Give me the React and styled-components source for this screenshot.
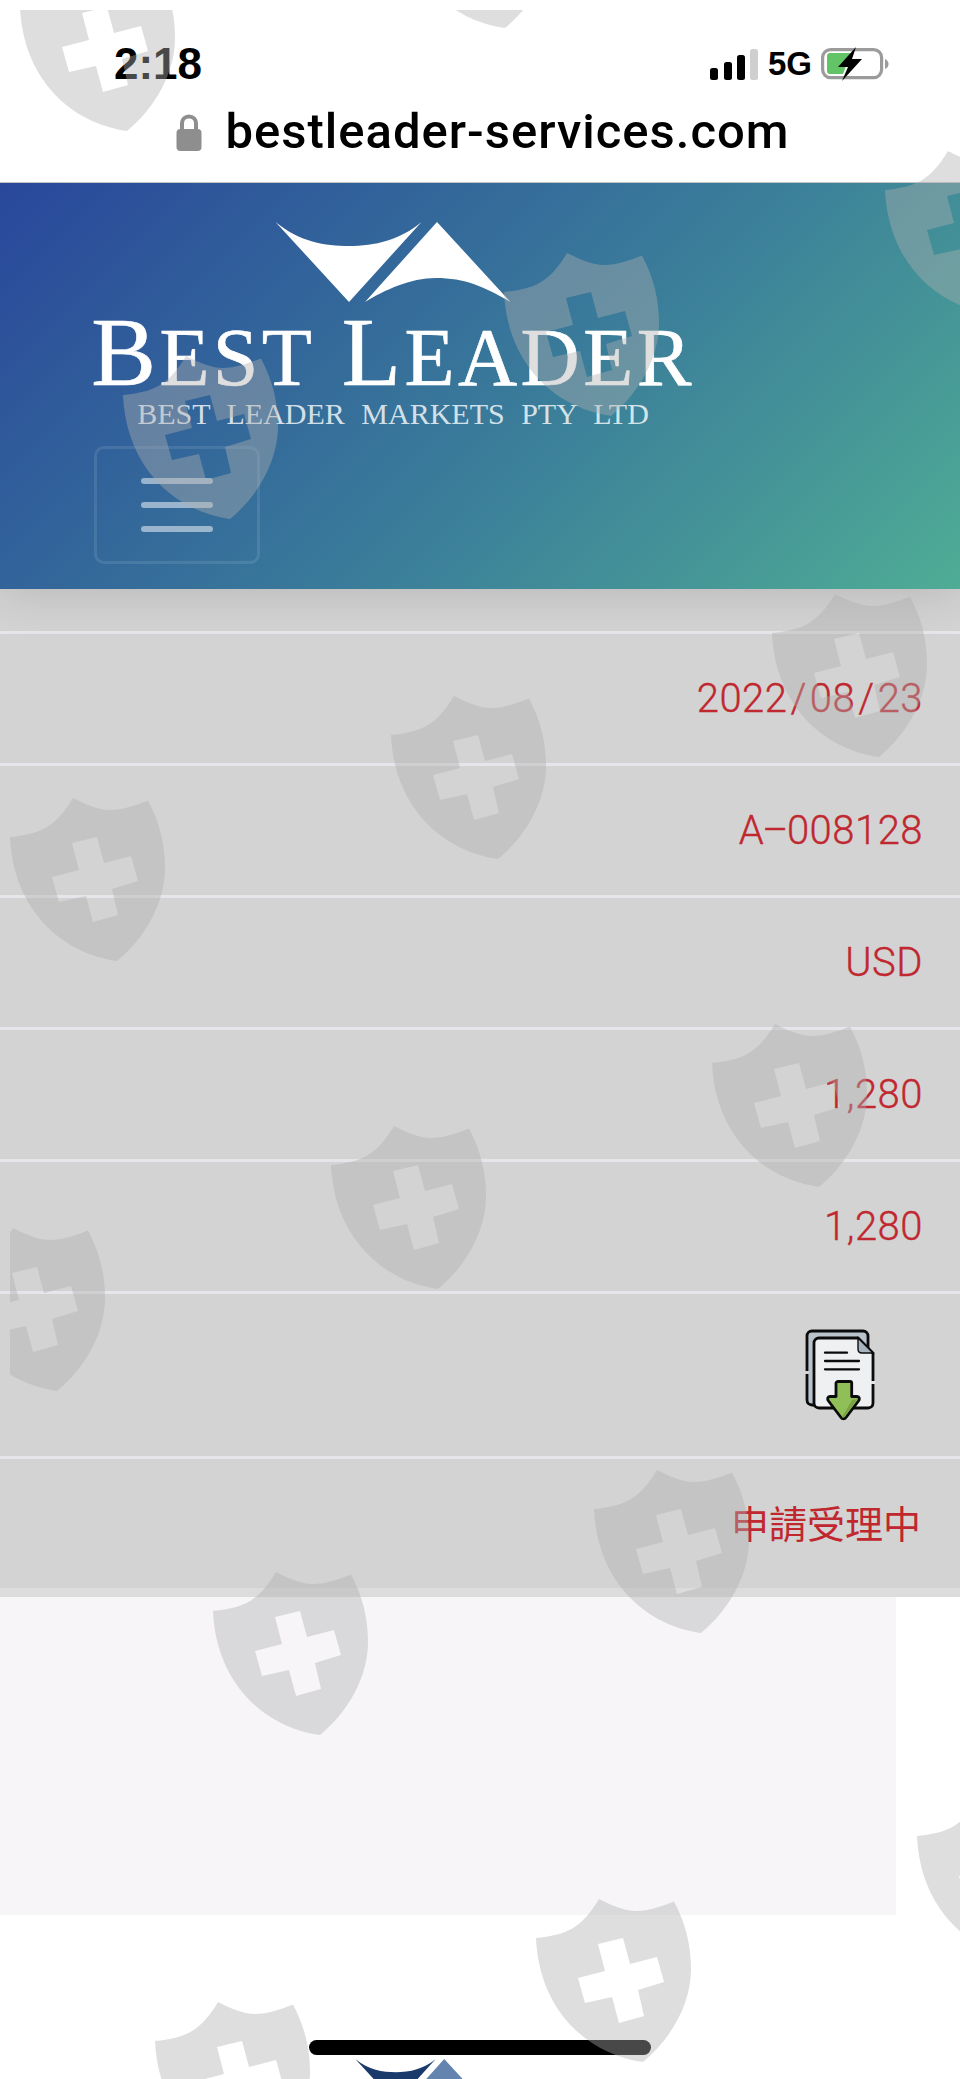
import React from 'react'
import styled, { createGlobalStyle } from 'styled-components'

const GlobalStyle = createGlobalStyle`
html, body {
    margin: 0;
    padding: 0;
    background: #fff;
    font-family: "Liberation Sans", Arial, sans-serif;
}
`

const Page = styled.div`
position: relative;
width: 960px;
height: 2079px;
overflow: hidden;
background: #fff;
`

/* watermark layer lies over everything */
const Watermark = styled.div`
position: absolute;
top: 10px;
left: 10px;
right: 0;
bottom: 0;
overflow: hidden;
z-index: 10;
pointer-events: none;
`

const ShieldSvg = styled.svg`
position: absolute;
width: 155px;
height: 163px;
left: ${p => p.$x - 10}px;
top: ${p => p.$y - 10}px;
`

const StatusArea = styled.div`
position: relative;
z-index: 1;
height: 183px;
box-sizing: border-box;
background: #fff;
border-bottom: 1px solid #c4c4c4;
display: flex;
flex-direction: column;
`

const StatusBar = styled.div`
display: flex;
justify-content: space-between;
align-items: center;
height: 32px;
margin-top: 48px;
padding: 0 71px 0 114px;
`

const Time = styled.span`
font-size: 44px;
font-weight: 700;
line-height: 32px;
color: #000;
`

const Indicators = styled.div`
display: flex;
align-items: center;
gap: 9px;
`

const NetworkLabel = styled.span`
font-size: 33px;
font-weight: 700;
line-height: 32px;
color: #000;
`

const UrlRow = styled.div`
display: flex;
justify-content: center;
align-items: center;
gap: 23px;
margin-top: 30px;
padding-left: 6px;
`

const UrlText = styled.span`
font-family: Roboto, "Liberation Sans", sans-serif;
font-size: 49px;
font-weight: 500;
line-height: 44px;
letter-spacing: 1px;
color: #000;
`

const Header = styled.header`
position: relative;
height: 406px;
box-sizing: border-box;
padding: 39px 0 0 94px;
background: linear-gradient(135deg, #29479b 0%, #3a7c9a 55%, #4fac95 100%);
box-shadow: 0 6px 44px rgba(0, 0, 0, 0.12);
`

const Logo = styled.div`
width: 598px;
display: flex;
flex-direction: column;
align-items: center;
color: #fff;
`

const LogoMark = styled.svg`
display: block;
width: ${p => p.$width}px;
height: auto;
`

const LogoName = styled.div`
font-family: "Liberation Serif", "Times New Roman", serif;
font-size: 82px;
line-height: 66px;
margin-top: 18px;
white-space: nowrap;
letter-spacing: 3.4px;
word-spacing: 4px;
-webkit-text-stroke: 0.6px #fff;
`

const LogoInitial = styled.span`
font-size: 97px;
`

const LogoSub = styled.div`
font-family: "Liberation Serif", "Times New Roman", serif;
font-size: 30px;
line-height: 24px;
margin-top: 11px;
white-space: nowrap;
word-spacing: 9px;
color: rgba(255, 255, 255, 0.8);
`

const MenuButton = styled.div`
width: 166px;
height: 118px;
box-sizing: border-box;
margin-top: 20px;
border: 3px solid rgba(255, 255, 255, 0.1);
border-radius: 10px;
display: flex;
flex-direction: column;
align-items: center;
justify-content: center;
gap: 18px;
`

const MenuBar = styled.span`
display: block;
width: 72px;
height: 6px;
border-radius: 3px;
background: rgba(255, 255, 255, 0.5);
`

const Table = styled.section`
background: #d3d3d3;
padding-top: 42px;
`

const Row = styled.div`
height: ${p => (p.$tall ? 165 : 132)}px;
box-sizing: border-box;
border-top: 3px solid #e6e6ea;
padding-right: ${p => (p.$tall ? 80 : 37)}px;
display: flex;
align-items: center;
justify-content: flex-end;
font-family: Roboto, "Liberation Sans", sans-serif;
font-size: 40px;
font-weight: 300;
letter-spacing: 0.5px;
-webkit-text-stroke: 0.35px #c0272f;
color: #c0272f;
`

const Slash = styled.span`
margin: 0 3px;
`

const Dash = styled.span`
margin: 0 -2px;
`

const CjkValue = styled.span`
font-family: "Noto Sans CJK TC", sans-serif;
font-size: 38px;
font-weight: 400;
letter-spacing: 0;
-webkit-text-stroke: 0;
margin: -4px 2px 0 0;
`

const TableFoot = styled.div`
height: 9px;
background: #dcdcdc;
`

const LightPanel = styled.div`
width: 896px;
height: 318px;
background: #f7f5f8;
`

const FootLogo = styled.div`
margin: 144px 0 0 355px;
`

const DocSvg = styled.svg`
display: block;
width: 80px;
height: 100px;
`

const HomeBar = styled.div`
position: absolute;
left: 309px;
top: 2040px;
width: 342px;
height: 15px;
border-radius: 8px;
background: #000;
z-index: 5;
`

const Shield = ({ x, y }) => (
    <ShieldSvg $x={x} $y={y} viewBox="0 0 155 163">
        <path
            fill="rgba(176,176,176,0.41)"
            fillRule="evenodd"
            d="M63 0C75 6 88 12 100 12C113 12 126 7 138 2.5C150 25 155 47 155 70C155 105 135 140 107 163C50 155 3 110 0 39C30 36 45 30 63 0ZM62 45L87 39L94 65L121 58L128 83L102 91L108 117L83 124L76 98L49 104L42 79L69 72Z"
        />
    </ShieldSvg>
)

const Mark = ({ width, left, right }) => (
    <LogoMark $width={width} viewBox="0 0 236 80">
        <path fill={left} d="M0.5 0C25 20 50 24 74 24C100 24 125 18 146.5 0L74 80Z" />
        <path fill={right} d="M162 0L235.5 80C210 65 190 56 161 56C135 56 110 68 90 80Z" />
    </LogoMark>
)

const SignalIcon = () => (
    <svg width="49" height="31" viewBox="0 0 49 31">
        <rect x="0" y="19" width="8" height="12" rx="2.5" fill="#000" />
        <rect x="14" y="13" width="8" height="18" rx="2.5" fill="#000" />
        <rect x="27" y="6" width="8" height="25" rx="2.5" fill="#000" />
        <rect x="40" y="0" width="8" height="31" rx="2.5" fill="#cfcfcf" />
    </svg>
)

const BatteryIcon = () => (
    <svg width="68" height="36" viewBox="0 0 68 36">
        <rect x="1.6" y="3.6" width="59" height="28" rx="8" fill="none" stroke="#9b9b9b" strokeWidth="3.2" />
        <path d="M64 13C66.5 14 67.5 16 67.5 18C67.5 20 66.5 22 64 23Z" fill="#9b9b9b" />
        <path d="M9 7H30L19 20H25L22 28H9C7 28 6 27 6 25V10C6 8 7 7 9 7Z" fill="#62c466" />
        <path d="M35 1L17 21H27L21 35L41 13H31Z" fill="#000" />
    </svg>
)

const LockIcon = () => (
    <svg width="26" height="37" viewBox="0 0 26 37">
        <path d="M6 17V9.5C6 5.5 9 2.5 13 2.5C17 2.5 20 5.5 20 9.5V17" fill="none" stroke="#8e8e8e" strokeWidth="4" />
        <rect x="0.5" y="15" width="25" height="22" rx="4" fill="#8e8e8e" />
    </svg>
)

const DocIcon = () => (
    <DocSvg viewBox="0 0 80 100">
        <path d="M12 6H63C66 6 68 8 68 11V75C68 78 66 80 63 80H12C9 80 7 78 7 75V11C7 8 9 6 12 6Z" fill="#b9c3cb" stroke="#0b0b0b" strokeWidth="2.8" />
        <path d="M19 13H58L73 28V78C73 81 71 83 68 83H19C16 83 14 81 14 78V18C14 15 16 13 19 13Z" fill="#eef0f2" stroke="#0b0b0b" strokeWidth="2.8" />
        <path d="M58 13L73 28H62C59.5 28 58 26.5 58 24Z" fill="#a5b4bf" stroke="#0b0b0b" strokeWidth="1.4" />
        <rect x="5" y="46" width="4" height="3" fill="#d3d3d3" />
        <rect x="71" y="56" width="4" height="3" fill="#e6e6ea" />
        <path d="M25 27.7H47M25 36H59M25 44.3H59" stroke="#0b0b0b" strokeWidth="2.3" strokeLinecap="round" />
        <path d="M38 56.5H50C51 56.5 51.7 57.3 51.7 58V71.5H57C59.5 71.5 60 74 58.5 76L46 92.5C44.7 94.3 42.3 94.3 41 92.5L28.5 76C27 74 27.5 71.5 30 71.5H36V58C36 57.3 37 56.5 38 56.5Z" fill="#8fbf56" stroke="#0b0b0b" strokeWidth="2.8" strokeLinejoin="round" />
        <path d="M57.5 74L45 91.5C44 92.5 43 92.8 42 92.5L52 75Z" fill="#7aa346" />
    </DocSvg>
)

const shields = [
    [20, -32], [398, -135], [885, 151], [504, 253], [123, 356],
    [772, 594], [391, 696], [10, 798], [712, 1024], [331, 1126],
    [-50, 1228], [594, 1470], [213, 1572], [917, 1797], [536, 1899], [155, 2002],
]

const App = () => {
    return (
        <Page>
            <GlobalStyle />
            <StatusArea>
                <StatusBar>
                    <Time>2:18</Time>
                    <Indicators>
                        <SignalIcon />
                        <NetworkLabel>5G</NetworkLabel>
                        <BatteryIcon />
                    </Indicators>
                </StatusBar>
                <UrlRow>
                    <LockIcon />
                    <UrlText>bestleader-services.com</UrlText>
                </UrlRow>
            </StatusArea>
            <Header>
                <Logo>
                    <Mark width={236} left="#fff" right="#fff" />
                    <LogoName>
                        <LogoInitial>B</LogoInitial>EST <LogoInitial>L</LogoInitial>EADER
                    </LogoName>
                    <LogoSub>BEST LEADER MARKETS PTY LTD</LogoSub>
                </Logo>
                <MenuButton>
                    <MenuBar />
                    <MenuBar />
                    <MenuBar />
                </MenuButton>
            </Header>
            <Table>
                <Row>2022<Slash>/</Slash>08<Slash>/</Slash>23</Row>
                <Row>A<Dash>–</Dash>008128</Row>
                <Row>USD</Row>
                <Row>1,280</Row>
                <Row>1,280</Row>
                <Row $tall>
                    <DocIcon />
                </Row>
                <Row><CjkValue>申請受理中</CjkValue></Row>
                <TableFoot />
            </Table>
            <LightPanel />
            <FootLogo>
                <Mark width={130} left="#1a3a6b" right="#6284ae" />
            </FootLogo>
            <Watermark>
                {shields.map(([x, y], i) => (
                    <Shield key={i} x={x} y={y} />
                ))}
            </Watermark>
            <HomeBar />
        </Page>
    )
}

export default App
